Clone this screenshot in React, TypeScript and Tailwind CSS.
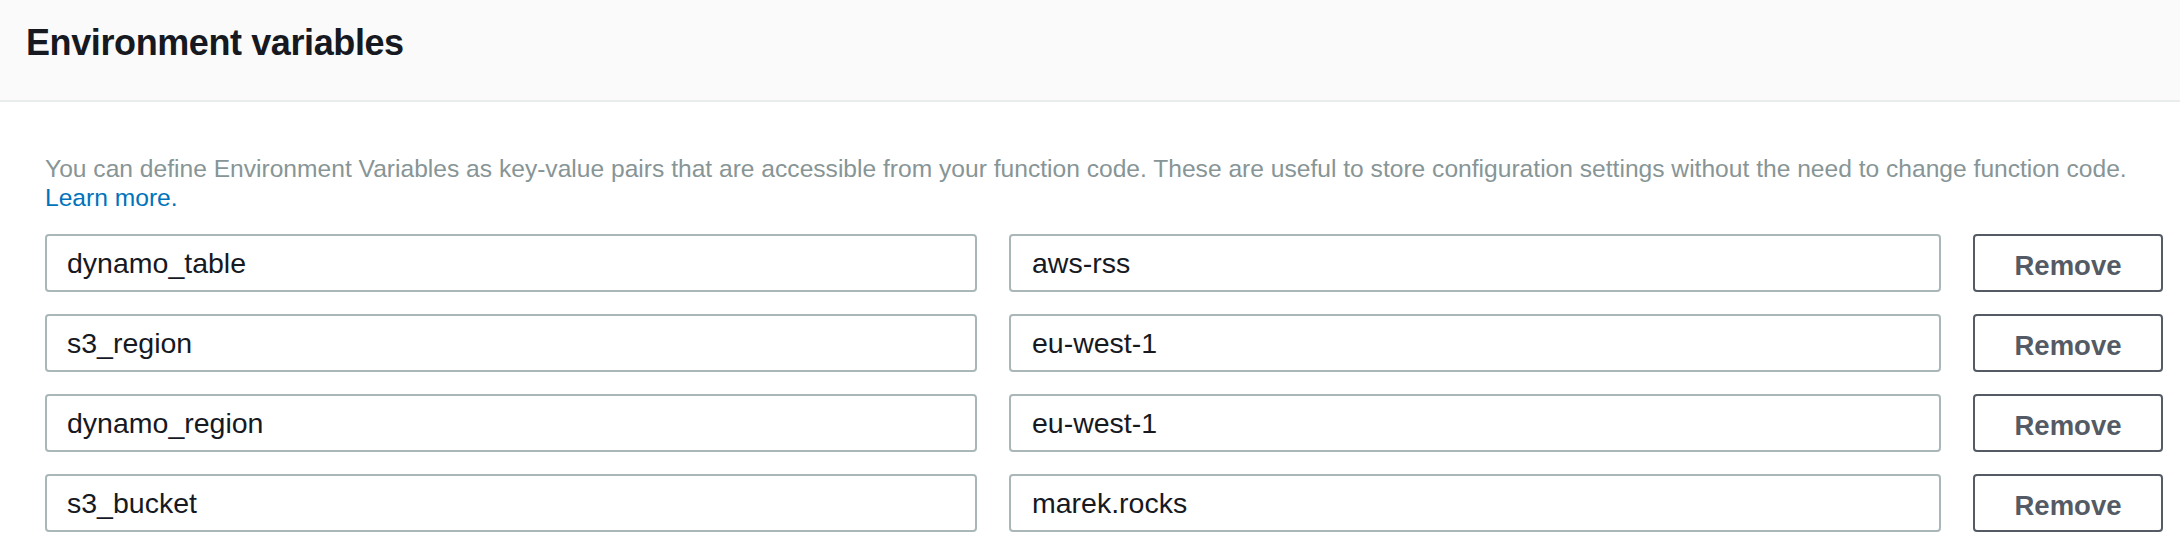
import React from "react";

const rows = [
  { key: "dynamo_table", value: "aws-rss" },
  { key: "s3_region", value: "eu-west-1" },
  { key: "dynamo_region", value: "eu-west-1" },
  { key: "s3_bucket", value: "marek.rocks" },
];

export default function App() {
  return (
    <div
      className="w-[2180px] h-[542px] overflow-hidden bg-white"
      style={{ fontFamily: '"Liberation Sans", Arial, sans-serif' }}
    >
      <div className="h-[102px] bg-[#fafafa] border-b-2 border-[#eaeded] pl-[26px] pt-[21px]">
        <h2 className="text-[36px] leading-[44px] font-bold tracking-[-0.4px] text-[#16191f]">
          Environment variables
        </h2>
      </div>
      <div className="flex flex-col gap-[22px] pt-[52px] pl-[45px] pr-[17px]">
        <p className="text-[24.6px] leading-[29px] text-[#879596] whitespace-nowrap">
          You can define Environment Variables as key-value pairs that are accessible from your function code. These are useful to store configuration settings without the need to change function code.
          <br />
          <a className="text-[#0073bb]" href="#">
            Learn more.
          </a>
        </p>
        <div className="flex flex-col gap-[22px]">
          {rows.map((r) => (
            <div key={r.key} className="grid grid-cols-[1fr_1fr_190px] gap-[32px] h-[58px]">
              <div className="flex items-center border-2 border-[#aab7b8] rounded-[4px] pl-[20px] text-[28.5px] text-[#16191f]">
                {r.key}
              </div>
              <div className="flex items-center border-2 border-[#aab7b8] rounded-[4px] pl-[21px] text-[28.5px] text-[#16191f]">
                {r.value}
              </div>
              <button className="flex items-center justify-center border-2 border-[#545b64] rounded-[4px] pt-[5px] text-[27.5px] font-bold text-[#545b64] bg-white">
                Remove
              </button>
            </div>
          ))}
        </div>
      </div>
    </div>
  );
}
